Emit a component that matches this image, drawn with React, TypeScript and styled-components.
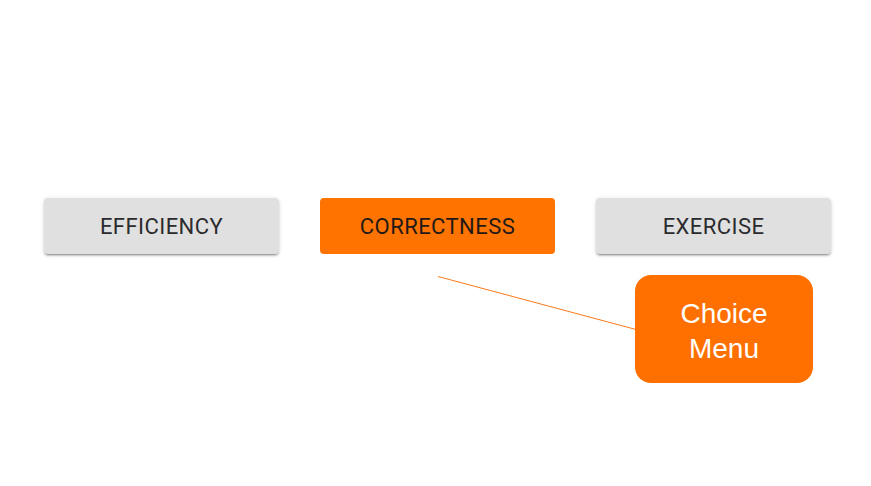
import React from "react";
import styled, { createGlobalStyle } from "styled-components";

const Global = createGlobalStyle`
  html, body { margin: 0; padding: 0; background: #ffffff; }
  body { width: 871px; height: 486px; overflow: hidden; }
`;

const Page = styled.div`
  position: relative;
  width: 871px;
  height: 486px;
  box-sizing: border-box;
  padding: 198px 40px 0 44px;
`;

const Row = styled.div`
  display: flex;
  gap: 41px;
`;

const ChoiceButton = styled.button<{ $active?: boolean }>`
  width: 235px;
  height: 56px;
  border: none;
  border-radius: 4px;
  font-family: Roboto, "Liberation Sans", sans-serif;
  font-size: 22px;
  font-weight: 400;
  letter-spacing: 0.02em;
  text-transform: uppercase;
  color: ${(p) => (p.$active ? "#1f1a17" : "#2b2b2e")};
  background: ${(p) => (p.$active ? "#ff7300" : "#e0e0e0")};
  box-shadow: ${(p) =>
    p.$active
      ? "none"
      : "0 3px 1px -2px rgba(0,0,0,0.22), 0 2px 2px 0 rgba(0,0,0,0.16), 0 1px 5px 0 rgba(0,0,0,0.12)"};
  cursor: pointer;
  padding: 0;
`;

const Leader = styled.svg`
  position: absolute;
  left: 0;
  top: 0;
  pointer-events: none;
`;

const Callout = styled.div`
  position: absolute;
  left: 635px;
  top: 275px;
  width: 178px;
  height: 108px;
  box-sizing: border-box;
  padding-top: 3px;
  border-radius: 16px;
  background: #ff7000;
  color: #ffffff;
  font-family: "Liberation Sans", Arial, sans-serif;
  font-size: 28px;
  line-height: 35px;
  display: flex;
  align-items: center;
  justify-content: center;
  text-align: center;
`;

export default function App() {
  return (
    <>
      <Global />
      <Page>
        <Row>
          <ChoiceButton>Efficiency</ChoiceButton>
          <ChoiceButton $active>Correctness</ChoiceButton>
          <ChoiceButton>Exercise</ChoiceButton>
        </Row>
        <Leader width="871" height="486" viewBox="0 0 871 486">
          <line x1="438" y1="276.5" x2="636" y2="329.5" stroke="#ff7a1a" strokeWidth="1" />
        </Leader>
        <Callout>
          Choice
          <br />
          Menu
        </Callout>
      </Page>
    </>
  );
}
